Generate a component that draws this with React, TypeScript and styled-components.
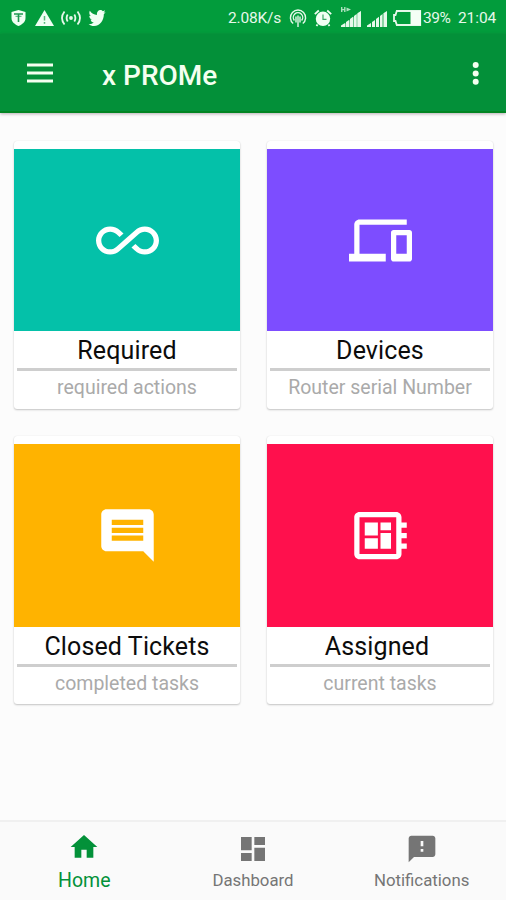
import React from "react";
import styled, { createGlobalStyle } from "styled-components";

const GlobalStyle = createGlobalStyle`
  * { box-sizing: border-box; }
  body { margin: 0; background: #fcfcfc; font-family: Roboto, "Noto Sans", sans-serif; }
`;

const Screen = styled.div`
  width: 506px;
  height: 900px;
  display: flex;
  flex-direction: column;
  overflow: hidden;
  background: #fcfcfc;
`;

const StatusBar = styled.div`
  height: 34px;
  flex: none;
  display: flex;
  align-items: center;
  padding: 1px 10px 0 10px;
  background: #029c3c;
  color: #e6f8ea;
`;

const StatusGroup = styled.div`
  display: flex;
  align-items: center;
`;

const Spacer = styled.div`
  flex: 1;
`;

const StatusText = styled.span<{ $width: number; $left?: number; $spacing?: number }>`
  width: ${(p) => p.$width}px;
  margin-left: ${(p) => p.$left ?? 0}px;
  font-size: 15.5px;
  line-height: 20px;
  letter-spacing: ${(p) => p.$spacing ?? 0}px;
  white-space: nowrap;
`;

const Glyph = styled.svg<{ $left?: number }>`
  display: block;
  flex: none;
  overflow: visible;
  margin-left: ${(p) => p.$left ?? 0}px;
`;

const AppBar = styled.header`
  height: 79px;
  flex: none;
  display: flex;
  align-items: center;
  padding: 0 23px 0 27px;
  background: #039039;
  border-bottom: 2px solid #028523;
  box-shadow: 0 1px 3px rgba(60, 30, 50, 0.35);
  color: #f4fff0;
`;

const IconButton = styled.button`
  display: flex;
  padding: 0;
  border: 0;
  background: none;
  color: inherit;
`;

const Title = styled.h1`
  flex: 1;
  margin: 7px 0 0 49px;
  font-size: 28px;
  line-height: 32px;
  font-weight: 500;
`;

const CardGrid = styled.main`
  flex: 1;
  display: grid;
  grid-template-columns: 226px 226px;
  grid-template-rows: 268px 268px;
  column-gap: 27px;
  row-gap: 27.2px;
  padding: 28px 14px 0;
`;

const Card = styled.article`
  display: flex;
  flex-direction: column;
  padding-top: 8px;
  border-radius: 3px;
  background: #fff;
  box-shadow: 0 1px 2px rgba(0, 0, 0, 0.22), 0 0 1px rgba(0, 0, 0, 0.1);
`;

const CardArt = styled.div<{ $color: string }>`
  height: 182.4px;
  flex: none;
  display: flex;
  align-items: center;
  justify-content: center;
  background: ${(p) => p.$color};
  color: #fff;
`;

const CardTitle = styled.h2<{ $inset?: number }>`
  height: 37px;
  margin: 0;
  padding-right: ${(p) => p.$inset ?? 0}px;
  font-size: 25px;
  line-height: 39px;
  font-weight: 400;
  text-align: center;
  color: #0c0c0c;
  letter-spacing: 0.12px;
`;

const Divider = styled.hr`
  width: 220px;
  height: 3px;
  margin: 0 auto;
  border: 0;
  background: #cecece;
`;

const CardText = styled.p`
  margin: 0;
  font-size: 19.5px;
  line-height: 34px;
  text-align: center;
  color: #aaa;
`;

const BottomNav = styled.nav`
  height: 80px;
  flex: none;
  display: grid;
  grid-template-columns: repeat(3, 1fr);
  background: #fafafa;
  border-top: 2px solid #f0f0f0;
`;

const NavItem = styled.button<{ $active?: boolean }>`
  display: flex;
  flex-direction: column;
  align-items: center;
  gap: ${(p) => (p.$active ? 5 : 2)}px;
  padding: ${(p) => (p.$active ? 9 : 11)}px 0 0;
  border: 0;
  background: none;
  font-family: inherit;
  font-size: ${(p) => (p.$active ? 19.5 : 16.8)}px;
  line-height: 26px;
  color: ${(p) => (p.$active ? "#039139" : "#757575")};
`;

const paths = {
  infinite:
    "M18.6 6.62c-1.44 0-2.8.56-3.77 1.53L12 10.66 10.48 12h.01L7.8 14.39c-.64.64-1.49.99-2.4.99-1.87 0-3.39-1.51-3.39-3.38S3.53 8.62 5.4 8.62c.91 0 1.76.35 2.44 1.03l1.13 1 1.51-1.34L9.22 8.2C8.2 7.18 6.84 6.62 5.4 6.62 2.42 6.62 0 9.04 0 12s2.42 5.38 5.4 5.38c1.44 0 2.8-.56 3.77-1.53l2.83-2.5.01.01L13.52 12h-.01l2.69-2.39c.64-.64 1.49-.99 2.4-.99 1.87 0 3.39 1.51 3.39 3.38s-1.52 3.38-3.39 3.38c-.9 0-1.76-.35-2.44-1.03l-1.14-1.01-1.51 1.34 1.27 1.12c1.02 1.01 2.37 1.57 3.82 1.57 2.98 0 5.4-2.41 5.4-5.38s-2.42-5.37-5.4-5.37z",
  devices:
    "M4 6h18V4H4c-1.1 0-2 .9-2 2v11H0v3h14v-3H4V6zm19 2h-6c-.55 0-1 .45-1 1v10c0 .55.45 1 1 1h6c.55 0 1-.45 1-1V9c0-.55-.45-1-1-1zm-1 9h-4v-7h4v7z",
  comment:
    "M21.99 4c0-1.1-.89-2-1.99-2H4c-1.1 0-2 .9-2 2v12c0 1.1.9 2 2 2h14l4 4-.01-18zM18 14H6v-2h12v2zm0-3H6V9h12v2zm0-3H6V6h12v2z",
  board:
    "M22 9V7h-2V5c0-1.1-.9-2-2-2H4c-1.1 0-2 .9-2 2v14c0 1.1.9 2 2 2h14c1.1 0 2-.9 2-2v-2h2v-2h-2v-2h2v-2h-2V9h2zm-4 10H4V5h14v14zM6 13h5v4H6zm6-6h4v3h-4zM6 7h5v5H6zm6 4h4v6h-4z",
  home: "M10 20v-6h4v6h5v-8h3L12 3 2 12h3v8z",
  dashboard: "M3 13h8V3H3v10zm0 8h8v-6H3v6zm10 0h8V11h-8v10zm0-18v6h8V3h-8z",
  feedback:
    "M20 2H4c-1.1 0-1.99.9-1.99 2L2 22l4-4h14c1.1 0 2-.9 2-2V4c0-1.1-.9-2-2-2zm-7 12h-2v-2h2v2zm0-4h-2V6h2v4z",
  bird: "M22.46 6c-.77.35-1.6.58-2.46.69.88-.53 1.56-1.37 1.88-2.38-.83.5-1.75.85-2.72 1.05C18.37 4.5 17.26 4 16 4c-2.35 0-4.27 1.92-4.27 4.29 0 .34.04.67.11.98C8.28 9.09 5.11 7.38 3 4.79c-.37.63-.58 1.37-.58 2.15 0 1.49.75 2.81 1.91 3.56-.71 0-1.37-.2-1.95-.5v.03c0 2.08 1.48 3.82 3.44 4.21a4.22 4.22 0 0 1-1.93.07 4.28 4.28 0 0 0 4 2.98 8.521 8.521 0 0 1-5.33 1.84c-.34 0-.68-.02-1.02-.06C3.44 20.29 5.7 21 8.12 21 16 21 20.33 14.46 20.33 8.79c0-.19 0-.37-.01-.56.84-.6 1.56-1.36 2.14-2.23z",
};

function MaterialIcon({ name, size }: { name: keyof typeof paths; size: number }) {
  return (
    <Glyph width={size} height={size} viewBox="0 0 24 24" fill="currentColor">
      <path d={paths[name]} />
    </Glyph>
  );
}

function Signal({ left, fast }: { left: number; fast?: boolean }) {
  return (
    <Glyph $left={left} width="20" height="20" viewBox="0 0 20 20" fill="currentColor">
      {fast && <path d="M0 19 20 3v16z" opacity=".45" />}
      <path d="M0 19v-1.5L4 15v4zM5 19v-5l3-2v7zM9 19v-8l3-2.2V19zM13 19V8l2.6-2v13zM16.4 19V5.2L20 3v16z" />
      {fast && <path d="M0-1h1.4v2h1.7v-2h1.4v5H3.1V2.2H1.4V4H0zM5.5-.5 10 1.5 5.5 3.5z" opacity=".75" />}
    </Glyph>
  );
}

const cards = [
  { title: "Required", text: "required actions", color: "#04c1a9", icon: "infinite", inset: 0 },
  { title: "Devices", text: "Router serial Number", color: "#7d4dff", icon: "devices", inset: 0 },
  { title: "Closed Tickets", text: "completed tasks", color: "#ffb300", icon: "comment", inset: 0 },
  { title: "Assigned", text: "current tasks", color: "#ff104d", icon: "board", inset: 6 },
] as const;

export default function App() {
  return (
    <Screen>
      <GlobalStyle />
      <StatusBar>
        <StatusGroup>
          <Glyph $left={1} width="15" height="16" viewBox="0 0 15 16">
            <path d="M7.5 0 14.5 2v6c0 4-3.4 6.5-7 8C3.9 14.5.5 12 .5 8V2z" fill="#f0fff3" />
            <path d="M3 4h9M7.5 4v8" stroke="#1b9950" strokeWidth="1.6" />
            <path d="M4.5 6.3h6" stroke="#1b9950" strokeWidth="0.8" />
          </Glyph>
          <Glyph $left={9} width="19" height="16" viewBox="0 0 19 16">
            <path d="M9.5 0 19 16H0z" fill="#f0fff3" />
            <path d="M9.5 6v4.5M9.5 12v1.8" stroke="#56b87b" strokeWidth="1.5" />
          </Glyph>
          <Glyph $left={7} width="20" height="16" viewBox="0 0 20 16" fill="none" stroke="currentColor" strokeWidth="1.8">
            <circle cx="10" cy="8" r="1.9" fill="currentColor" stroke="none" />
            <path d="M6.7 4.5q-2.2 3.5 0 7M13.3 4.5q2.2 3.5 0 7M3.5 1.5q-5 6.5 0 13M16.5 1.5q5 6.5 0 13" />
          </Glyph>
          <Glyph $left={8} width="17" height="16" viewBox="2 4 21 17" preserveAspectRatio="none" fill="#f0fff3">
            <path d={paths.bird} />
          </Glyph>
        </StatusGroup>
        <Spacer />
        <StatusGroup>
          <StatusText $width={63} $spacing={-0.2}>2.08K/s</StatusText>
          <Glyph $left={-2} width="18" height="18" viewBox="0 0 18 18" fill="none" stroke="currentColor" strokeWidth="1.4">
            <path d="M4.2 14.5A7.6 7.6 0 1 1 13.8 14.5M5.4 11.5A4.7 4.7 0 1 1 12.6 11.5M9 6.5v11.5M7 7.5v6M11 7.5v6" />
          </Glyph>
          <Glyph $left={7} width="18" height="18" viewBox="0 0 18 18">
            <circle cx="9" cy="9.8" r="7.2" fill="#f0fff3" />
            <path d="M.8 5.2 4.8 1.5M17.2 5.2 13.2 1.5M3.5 15.5 2.5 17M14.5 15.5l1 1.5" stroke="#f0fff3" strokeWidth="1.8" />
            <path d="M9 5.5v4.8h3.5" fill="none" stroke="#3ba866" strokeWidth="1.2" />
          </Glyph>
          <Signal left={9} fast />
          <Signal left={6} />
          <Glyph $left={6} width="28" height="16" viewBox="0 0 28 16">
            <path d="M3.8 1h23.4v14H3.8L2.5 11H1V5h1.5z" fill="none" stroke="currentColor" strokeWidth="1.8" />
            <path d="M17.5 1H28v14H17.5z" fill="#f4fff5" />
          </Glyph>
          <StatusText $width={35} $left={2} $spacing={-0.4}>39%</StatusText>
          <StatusText $width={38} $spacing={-0.1}>21:04</StatusText>
        </StatusGroup>
      </StatusBar>

      <AppBar>
        <IconButton aria-label="Menu">
          <Glyph width="26" height="20" viewBox="0 0 26 20" fill="currentColor">
            <path d="M0 .5h26v3H0zM0 8.5h26v3H0zM0 16.5h26v3H0z" />
          </Glyph>
        </IconButton>
        <Title>x PROMe</Title>
        <IconButton aria-label="More options">
          <Glyph width="15" height="24" viewBox="0 0 15 24" fill="currentColor">
            <circle cx="7.7" cy="4" r="3" />
            <circle cx="7.7" cy="12.4" r="3" />
            <circle cx="7.7" cy="20.8" r="3" />
          </Glyph>
        </IconButton>
      </AppBar>

      <CardGrid>
        {cards.map((card) => (
          <Card key={card.title}>
            <CardArt $color={card.color}>
              <MaterialIcon name={card.icon} size={63} />
            </CardArt>
            <CardTitle $inset={card.inset}>{card.title}</CardTitle>
            <Divider />
            <CardText>{card.text}</CardText>
          </Card>
        ))}
      </CardGrid>

      <BottomNav>
        <NavItem $active>
          <MaterialIcon name="home" size={32} />
          Home
        </NavItem>
        <NavItem>
          <MaterialIcon name="dashboard" size={32} />
          Dashboard
        </NavItem>
        <NavItem>
          <MaterialIcon name="feedback" size={32} />
          Notifications
        </NavItem>
      </BottomNav>
    </Screen>
  );
}
